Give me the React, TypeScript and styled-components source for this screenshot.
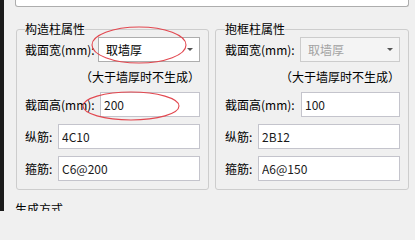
import styled, { createGlobalStyle } from "styled-components";

const GlobalStyle = createGlobalStyle`
  html, body {
    margin: 0;
    padding: 0;
    background: #f0f0f0;
    overflow: hidden;
  }
  body {
    font-family: "Noto Sans CJK SC", "Noto Sans", sans-serif;
    font-size: 12px;
    color: #000;
  }
`;

const Window = styled.div`
  position: relative;
  display: flex;
  width: 415px;
  height: 211px;
  overflow: hidden;
`;

const SideStrip = styled.div`
  width: 4px;
  flex-shrink: 0;
  background: #1b1b1b;
`;

const Content = styled.div`
  flex: 1;
  display: flex;
  flex-direction: column;
  padding: 0 6px 0 11px;

  & > * {
    flex-shrink: 0;
  }
`;

const TopPanel = styled.div`
  height: 6px;
  background: #fff;
  border: 1px solid #adadad;
  border-top: none;
  border-radius: 0 0 3px 3px;
`;

const GroupRow = styled.div`
  display: flex;
  gap: 6px;
  margin-top: 14px;
  padding-left: 1px;
`;

const GroupBox = styled.fieldset<{ $w: number; $pl: number }>`
  width: ${(p) => p.$w}px;
  box-sizing: border-box;
  margin: 0;
  min-width: 0;
  padding: 0 8px 8px ${(p) => p.$pl}px;
  border: 1px solid #cdcdcd;
  border-radius: 3px;
`;

const Legend = styled.legend`
  padding: 0;
  font-size: 12px;
  line-height: 16px;
`;

const Body = styled.div`
  display: flex;
  flex-direction: column;
  gap: 7px;
`;

const Row = styled.div`
  display: flex;
  align-items: center;
  height: 25px;
`;

const Label = styled.span<{ $w: number }>`
  width: ${(p) => p.$w}px;
  flex-shrink: 0;
  white-space: nowrap;
  line-height: 16px;
`;

const Field = styled.input`
  flex: 1;
  min-width: 0;
  height: 25px;
  box-sizing: border-box;
  margin: 0;
  padding: 0 0 0 3px;
  border: 1px solid #c4c4cc;
  background: #fff;
  font-family: inherit;
  font-size: 12px;
  color: #1a1a1a;
  outline: none;
`;

const Combo = styled.div<{ $disabled?: boolean }>`
  flex: 1;
  height: 25px;
  box-sizing: border-box;
  display: flex;
  align-items: center;
  justify-content: space-between;
  padding: 0 6px 0 7px;
  border: 1px solid ${(p) => (p.$disabled ? "#cccccc" : "#adadad")};
  background: ${(p) => (p.$disabled ? "#f4f4f4" : "#fff")};
  color: ${(p) => (p.$disabled ? "#a2a2a2" : "#000")};
`;

const Arrow = styled.span`
  width: 0;
  height: 0;
  border-left: 3px solid transparent;
  border-right: 3px solid transparent;
  border-top: 3px solid #555;
`;

const Note = styled.div`
  height: 16px;
  line-height: 16px;
  text-align: right;
  white-space: nowrap;
`;

const SectionTitle = styled.div`
  margin-top: 11px;
  line-height: 16px;
`;

const Marks = styled.svg`
  position: absolute;
  left: 0;
  top: 0;
  pointer-events: none;
`;

type Props = {
  title: string;
  width: number;
  padLeft: number;
  disabled?: boolean;
  height: string;
  main: string;
  stirrup: string;
  labelW: [number, number];
};

function ColumnGroup({ title, width, padLeft, disabled, height, main, stirrup, labelW }: Props) {
  return (
    <GroupBox $w={width} $pl={padLeft}>
      <Legend>{title}</Legend>
      <Body>
        <Row>
          <Label $w={labelW[0]}>截面宽(mm):</Label>
          <Combo $disabled={disabled}>
            <span>取墙厚</span>
            <Arrow />
          </Combo>
        </Row>
        <Note>（大于墙厚时不生成）</Note>
        <Row>
          <Label $w={labelW[1]}>截面高(mm):</Label>
          <Field readOnly defaultValue={height} />
        </Row>
        <Row>
          <Label $w={33}>纵筋:</Label>
          <Field readOnly defaultValue={main} />
        </Row>
        <Row>
          <Label $w={33}>箍筋:</Label>
          <Field readOnly defaultValue={stirrup} />
        </Row>
      </Body>
    </GroupBox>
  );
}

export default function App() {
  return (
    <Window>
      <GlobalStyle />
      <SideStrip />
      <Content>
        <TopPanel />
        <GroupRow>
          <ColumnGroup
            title="构造柱属性"
            width={193}
            padLeft={8}
            height="200"
            main="4C10"
            stirrup="C6@200"
            labelW={[73, 75]}
          />
          <ColumnGroup
            title="抱框柱属性"
            width={194}
            padLeft={9}
            disabled
            height="100"
            main="2B12"
            stirrup="A6@150"
            labelW={[75, 76]}
          />
        </GroupRow>
        <SectionTitle>生成方式</SectionTitle>
      </Content>
      <Marks width="415" height="211" viewBox="0 0 415 211">
        <ellipse cx="139" cy="45" rx="47" ry="18" fill="none" stroke="#e2474f" strokeWidth="1.1" />
        <ellipse cx="131" cy="106" rx="48" ry="14" fill="none" stroke="#e2474f" strokeWidth="1.1" />
      </Marks>
    </Window>
  );
}
